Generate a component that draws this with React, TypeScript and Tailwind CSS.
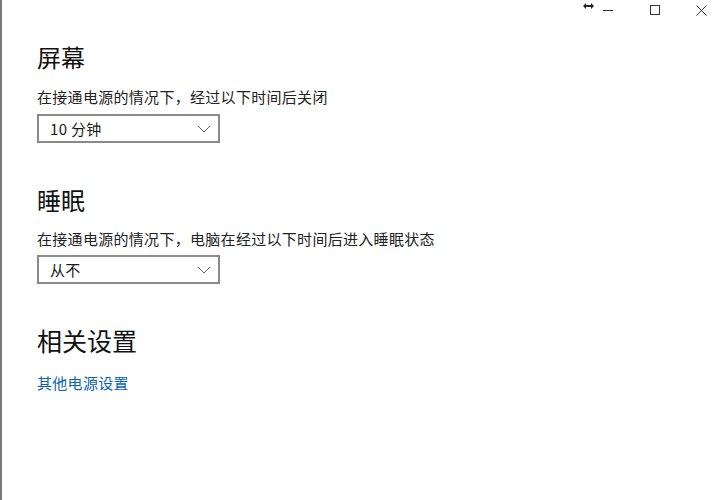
import React from "react"

const font = { fontFamily: '"Microsoft YaHei", "Noto Sans CJK SC", "Noto Sans", sans-serif' }

function Dropdown({ value }: { value: string }) {
  return (
    <div className="flex h-[29px] w-[183px] items-center justify-between border-2 border-[#8a8a8a] bg-white pl-[11px] pr-[7px]">
      <span className="text-[15px] leading-none tracking-[0.3px] text-[#1a1a1a]">{value}</span>
      <svg width="14" height="8" viewBox="0 0 14 8" fill="none" stroke="#666" strokeWidth="1">
        <path d="M1 1l6 6 6-6" />
      </svg>
    </div>
  )
}

export default function App() {
  return (
    <div className="relative h-[500px] w-[717px] overflow-hidden border-l-2 border-[#7b7b7b] bg-white" style={font}>
      {/* window controls */}
      <div className="absolute right-0 top-0 flex h-[22px] items-start pr-[5px]">
        <div className="flex h-[12px] w-[16px] items-center justify-center">
          <svg width="11" height="6" viewBox="0 0 11 6" fill="#222">
            <path d="M0 3l3-3v2h5V0l3 3-3 3V4H3v2z" />
          </svg>
        </div>
        <div className="flex h-[20px] w-[24px] items-center justify-center">
          <div className="h-px w-[10px] bg-[#333]" />
        </div>
        <div className="flex h-[20px] w-[70px] items-center justify-center">
          <div className="h-[10px] w-[10px] border border-[#333]" />
        </div>
        <div className="flex h-[20px] w-[22px] items-center justify-center">
          <svg width="11" height="11" viewBox="0 0 11 11" stroke="#333" strokeWidth="1">
            <path d="M0.5 0.5l10 10M10.5 0.5l-10 10" />
          </svg>
        </div>
      </div>

      <div className="flex flex-col pl-[35px] pt-[41px]">
        <h2 className="text-[24px] leading-[32px] text-[#111]">屏幕</h2>
        <p className="mt-[14px] text-[15px] leading-[20px] tracking-[0.3px] text-[#222]">在接通电源的情况下，经过以下时间后关闭</p>
        <div className="mt-[7px]">
          <Dropdown value="10 分钟" />
        </div>

        <h2 className="mt-[41px] text-[24px] leading-[32px] text-[#111]">睡眠</h2>
        <p className="mt-[13px] text-[15px] leading-[20px] tracking-[0.3px] text-[#222]">在接通电源的情况下，电脑在经过以下时间后进入睡眠状态</p>
        <div className="mt-[6px]">
          <Dropdown value="从不" />
        </div>

        <h2 className="mt-[39px] text-[25px] leading-[34px] text-[#111]">相关设置</h2>
        <a className="mt-[16px] text-[15px] leading-[20px] tracking-[0.3px] text-[#0a64b4]">其他电源设置</a>
      </div>
    </div>
  )
}
